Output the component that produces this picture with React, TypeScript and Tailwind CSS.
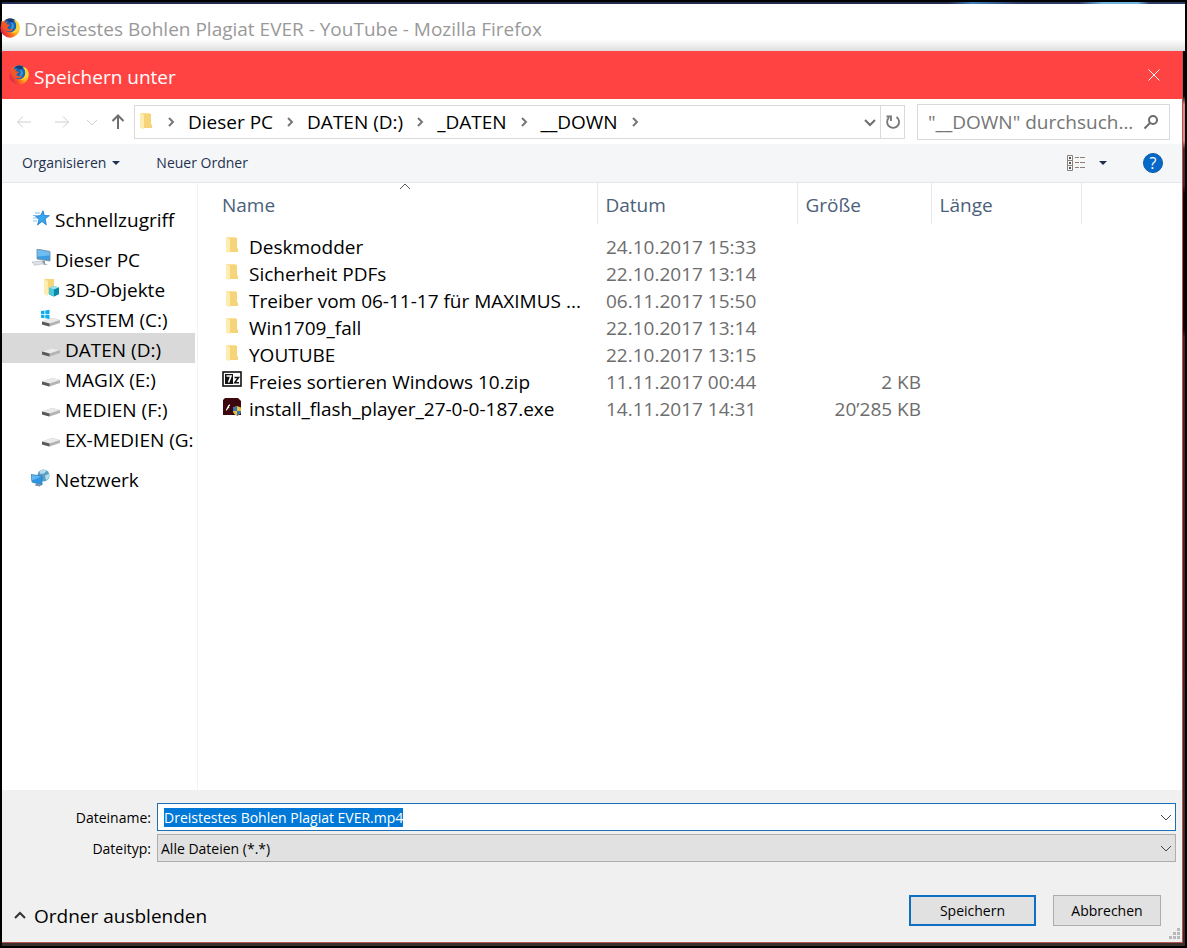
import { useEffect, useRef, type ReactNode } from 'react';

interface FileEntry {
  name: string;
  date: string;
  size?: string;
  kind: 'folder' | 'zip' | 'flash';
}

interface Place {
  label: string;
  icon: ReactNode;
  selected?: boolean;
}

interface PlaceGroup {
  root: Place;
  children: Place[];
}

const FirefoxIcon = () => (
  <svg viewBox="0 0 20 20" className="size-5 shrink-0" aria-hidden="true">
    <defs>
      <linearGradient id="fox" x1="1" y1="0.2" x2="0" y2="0.8">
        <stop offset="0" stopColor="#ffe53a" />
        <stop offset="0.4" stopColor="#ffae1c" />
        <stop offset="0.7" stopColor="#f9502a" />
        <stop offset="1" stopColor="#d2185a" />
      </linearGradient>
    </defs>
    <circle cx="10" cy="10" r="9.700" fill="url(#fox)" />
    <path d="M5 2.500C8-.3 13-.2 15.500 2.500c1.500 3 1.700 7-.5 9.500-2.500 3-7.500 3-9.500 0C4 9 3.500 5.500 5 2.500z" fill="#1a64b8" />
    <path d="M6 1.800C8.500-.2 12.500 0 14.800 1.900L12 4.500 8.500 3.500z" fill="#163a7c" />
    <path d="M11 4.500c2.500.5 3.500 3 2.500 5.500l-3 1.500 1.500-4z" fill="#38a0dc" />
    <path
      d="M1.500 2.800c1 1.200 2 1.700 3.500 1.700.9-.5 2-.8 3-.7-1 .8-1.400 1.600-1.300 2.400l3 .6c.2 1-.6 1.500-2 2-.5 1 .2 2 1.400 2.400 1.600.500 2.700-.7 3.800 0-.7 1.500-2 2-3.400 2-3.500.2-6-2-7-5C1.500 6.500 1 4.500 1.500 2.800z"
      fill="#f0582a"
    />
    <path d="M13.500 2c2.500 2 3.300 5 2.500 8-.6 2.500-2.500 4.200-5 4.700 4 .8 8-2 8.600-6C19.800 5.500 17 2.500 13.500 2z" fill="#ffd334" />
  </svg>
);

const FolderIcon = () => (
  <svg viewBox="0 0 14 18" className="h-[18px] w-[14px] shrink-0" aria-hidden="true">
    <path d="M1 1h10v15H1z" fill="#fbe29a" />
    <path d="M4 2h8v10l1 1v3H4z" fill="#f6d47a" />
    <path d="M1 1l4 2v14l-4-1z" fill="#ffecb0" />
  </svg>
);

const ZipIcon = () => (
  <svg viewBox="0 0 20 16" className="h-4 w-5 shrink-0" aria-hidden="true">
    <rect x="1" y="1" width="18" height="14" fill="#fff" stroke="#111" strokeWidth="1.600" />
    <rect x="3" y="3" width="8" height="10" fill="#111" />
    <path d="M4.500 5h4.500L6.500 11.500" stroke="#fff" strokeWidth="1.600" fill="none" />
    <path d="M12.500 6.500h4L12.800 11.800h4.200" stroke="#111" strokeWidth="1.600" fill="none" />
  </svg>
);

const FlashIcon = () => (
  <svg viewBox="0 0 20 18" className="h-[18px] w-5 shrink-0" aria-hidden="true">
    <path d="M3 0h13l3 3v14H1V2z" fill="#3c080d" />
    <path d="M4 12c1.500 0 2-5 4-5M5.500 9.700h1.700" stroke="#fff" strokeWidth="1.300" fill="none" />
    <path d="M11 9.500l4-1.500 4 1.500v3.500c0 2.500-2.300 4-4 5-1.700-1-4-2.500-4-5z" fill="#e9c23d" />
    <path d="M11 9.500l4-1.500v5h-4zM15 13h4c0 2.500-2.300 4-4 5z" fill="#3276b8" />
  </svg>
);

const StarIcon = () => (
  <svg viewBox="0 0 18 16" className="h-4 w-[18px] shrink-0" aria-hidden="true">
    <path
      d="M11 .8l1.300 4.700 5 .2-4.200 3.100 1.200 6-4.300-3.300L5.500 15l1.600-5.500-3.600-3.300 5-.7z"
      fill="#39a5ee"
      stroke="#1976c8"
      strokeWidth="0.800"
    />
    <path d="M3 3h5M1 5.500h4M1 8h4M1 11h4" stroke="#6bb9ee" strokeWidth="0.900" />
  </svg>
);

const ComputerIcon = () => (
  <svg viewBox="0 0 20 18" className="h-[18px] w-5 shrink-0" aria-hidden="true">
    <path d="M6 0l13 2.500v9.500L6 10z" fill="#3c9de2" stroke="#78899a" strokeWidth="0.800" />
    <path d="M6.500.6l12 2.400v3.500l-12 1z" fill="#6fbdf0" />
    <path d="M11 11.500l3 .5v2.500l3 1.500-5-.5z" fill="#8b98a3" />
    <path d="M1 13l9-1 3 2.600-9.500 1.700z" fill="#dce2e6" stroke="#aeb7bd" strokeWidth="0.600" />
  </svg>
);

const ObjectsIcon = () => (
  <svg viewBox="0 0 20 20" className="size-5 shrink-0" aria-hidden="true">
    <path d="M3 1h10v15H3z" fill="#f6d47a" />
    <path d="M3 1l4 2v15l-4-2z" fill="#ffecb0" />
    <path d="M8 10l5-2 5 1.500v6.500l-5 2.500-5-2z" fill="#1ba6c4" />
    <path d="M8 10l5-2 5 1.500-5 2z" fill="#9ae5f1" />
    <path d="M13 11.500l5-2v6.500l-5 2.500z" fill="#0b87a8" />
    <path d="M8 10l5 1.500v7l-5-2z" fill="#45c8dd" />
  </svg>
);

const DriveIcon = ({ system = false }: { system?: boolean }) => (
  <svg viewBox="0 0 20 20" className="size-5 shrink-0" aria-hidden="true">
    <path d="M1 13.500L11 10l8 2v3L8.500 18.500 1 16.500z" fill="#b4b4b4" />
    <path d="M1 13.500L11 10l8 2-10.500 3.500z" fill="#eaeaea" />
    <path d="M1 13.500l7.500 2v3L1 16.500z" fill="#5a5a5a" />
    {system && (
      <path d="M0 3l3.500-.5V6H0zM4.300 2.400L8.500 1.800V6H4.300zM0 6.800h3.500v3.400L0 9.800zM4.300 6.800h4.200V11l-4.200-.7z" fill="#10aee8" />
    )}
  </svg>
);

const NetworkIcon = () => (
  <svg viewBox="0 0 20 18" className="h-[18px] w-5 shrink-0" aria-hidden="true">
    <circle cx="12.500" cy="6.500" r="6" fill="#5b9fc4" />
    <path d="M8.500 2.500c2-2 5-2.500 7-.6L13 4.500 9.500 5zM14 6.500l4-1.500c.5 3-.6 5-3 6.500z" fill="#b7dceb" />
    <path d="M0 5.500l11 1.500v9L1 13z" fill="#2c94e0" stroke="#2878b4" strokeWidth="0.700" />
    <path d="M.5 6l10 1.500-9.500 4z" fill="#63b7f0" />
    <path d="M5 14.500l5 1.500-1 1.500-5-1z" fill="#7790a0" />
  </svg>
);

type Direction = 'up' | 'down' | 'right';

const chevronPaths: Record<Direction, string> = {
  up: 'M1 8l5-5 5 5',
  down: 'M1 4l5 5 5-5',
  right: 'M4 2l4 4-4 4',
};

const Chevron = ({ direction, className }: { direction: Direction; className: string }) => (
  <svg viewBox="0 0 12 12" className={`size-3 shrink-0 ${className}`} fill="none" stroke="currentColor" aria-hidden="true">
    <path d={chevronPaths[direction]} />
  </svg>
);

const Arrow = ({ className }: { className: string }) => (
  <svg viewBox="0 0 16 16" className={`size-4 shrink-0 ${className}`} fill="none" stroke="currentColor" aria-hidden="true">
    <path d="M15 8H1.500M7 2.500L1.500 8 7 13.500" />
  </svg>
);

const Triangle = () => (
  <svg viewBox="0 0 8 4" className="h-1 w-2 shrink-0" aria-hidden="true">
    <path d="M0 0h8L4 4z" fill="#1e3250" />
  </svg>
);

const fileIcons: Record<FileEntry['kind'], ReactNode> = {
  folder: <FolderIcon />,
  zip: <ZipIcon />,
  flash: <FlashIcon />,
};

const crumbs = ['Dieser PC', 'DATEN (D:)', '_DATEN', '__DOWN'];

const placeGroups: PlaceGroup[] = [
  { root: { label: 'Schnellzugriff', icon: <StarIcon /> }, children: [] },
  {
    root: { label: 'Dieser PC', icon: <ComputerIcon /> },
    children: [
      { label: '3D-Objekte', icon: <ObjectsIcon /> },
      { label: 'SYSTEM (C:)', icon: <DriveIcon system /> },
      { label: 'DATEN (D:)', icon: <DriveIcon />, selected: true },
      { label: 'MAGIX (E:)', icon: <DriveIcon /> },
      { label: 'MEDIEN (F:)', icon: <DriveIcon /> },
      { label: 'EX-MEDIEN (G:', icon: <DriveIcon /> },
    ],
  },
  { root: { label: 'Netzwerk', icon: <NetworkIcon /> }, children: [] },
];

const files: FileEntry[] = [
  { name: 'Deskmodder', date: '24.10.2017 15:33', kind: 'folder' },
  { name: 'Sicherheit PDFs', date: '22.10.2017 13:14', kind: 'folder' },
  { name: 'Treiber vom 06-11-17 für MAXIMUS ...', date: '06.11.2017 15:50', kind: 'folder' },
  { name: 'Win1709_fall', date: '22.10.2017 13:14', kind: 'folder' },
  { name: 'YOUTUBE', date: '22.10.2017 13:15', kind: 'folder' },
  { name: 'Freies sortieren Windows 10.zip', date: '11.11.2017 00:44', size: '2 KB', kind: 'zip' },
  { name: 'install_flash_player_27-0-0-187.exe', date: '14.11.2017 14:31', size: '20’285 KB', kind: 'flash' },
];

const NavigationBar = () => (
  <nav className="flex h-[45px] items-center pr-3">
    <div className="flex w-[132px] shrink-0 items-center">
      <button type="button" aria-label="Zurück" className="ml-3.5">
        <Arrow className="text-[#cfcfcf]" />
      </button>
      <button type="button" aria-label="Vorwärts" className="ml-[22px]">
        <Arrow className="rotate-180 text-[#cfcfcf]" />
      </button>
      <button type="button" aria-label="Zuletzt besucht" className="ml-4">
        <Chevron direction="down" className="text-[#cfcfcf]" />
      </button>
      <button type="button" aria-label="Nach oben" className="ml-3">
        <Arrow className="rotate-90 stroke-2 text-[#6e6e6e]" />
      </button>
    </div>
    <div className="flex h-[34px] flex-1 items-center border border-[#d9d9d9]">
      <span className="ml-1 pb-0.5">
        <FolderIcon />
      </span>
      <Chevron direction="right" className="mr-[11px] ml-3 stroke-2 text-[#777]" />
      {crumbs.map((crumb) => (
        <div key={crumb} className="flex items-center">
          <button type="button" className="whitespace-nowrap pt-0.5">
            {crumb}
          </button>
          <Chevron direction="right" className="mx-[11px] stroke-2 text-[#777]" />
        </div>
      ))}
      <button type="button" aria-label="Vorherige Orte" className="mr-1 ml-auto">
        <Chevron direction="down" className="stroke-2 text-[#6e6e6e]" />
      </button>
      <button
        type="button"
        aria-label="Aktualisieren"
        className="flex h-full w-6 items-center justify-center border-l border-[#d9d9d9]"
      >
        <svg viewBox="0 0 16 16" className="size-4" fill="none" stroke="#777" strokeWidth="1.800" aria-hidden="true">
          <path d="M11.500 2.900A6 6 0 1 1 4 3.500" />
          <path d="M1.500 2.500h4.500v4.500" />
        </svg>
      </button>
    </div>
    <div className="ml-3 flex h-9 w-[253px] shrink-0 items-center border border-[#d9d9d9] pr-2.5 pl-2.5">
      <input
        type="text"
        aria-label="Suchen"
        placeholder={'"__DOWN" durchsuch...'}
        className="min-w-0 flex-1 pt-0.5 outline-none placeholder:text-[#757575]"
      />
      <svg viewBox="0 0 16 16" className="size-4 shrink-0" fill="none" stroke="#6b6b6b" strokeWidth="2" aria-hidden="true">
        <circle cx="10" cy="6" r="4" />
        <path d="M7 9l-5.500 5.500" />
      </svg>
    </div>
  </nav>
);

const Toolbar = () => (
  <div className="flex h-[39px] items-center border-b border-[#e3e6ea] bg-[#f5f6f8] pr-[19px] pl-5 text-sm text-[#1e3250]">
    <button type="button" className="flex items-center gap-1.5">
      Organisieren
      <Triangle />
    </button>
    <button type="button" className="ml-9">
      Neuer Ordner
    </button>
    <button type="button" aria-label="Ansicht ändern" className="ml-auto flex items-center gap-3.5">
      <svg viewBox="0 0 18 16" className="h-4 w-[18px]" fill="none" stroke="#8c8078" aria-hidden="true">
        <path d="M.5.5h5v15h-5zM.5 5.500h5M.5 10.500h5M8 2.500h4M13 2.500h5M8 7.500h4M13 7.500h5M8 12.500h4M13 12.500h5" />
        <path d="M2 3h2M2 8h2M2 13h2" stroke="#555" strokeWidth="2" />
      </svg>
      <Triangle />
    </button>
    <button
      type="button"
      aria-label="Hilfe"
      className="ml-9 flex size-5 items-center justify-center rounded-full border border-[#0a5aa8] bg-[#0669c8] text-base text-white"
    >
      ?
    </button>
  </div>
);

const PlaceItem = ({ place, nested = false }: { place: Place; nested?: boolean }) => (
  <li>
    <button
      type="button"
      className={`flex h-[30px] w-full items-center gap-1 whitespace-nowrap ${nested ? 'pl-[39px]' : 'pl-[29px]'} ${
        place.selected ? 'bg-[#d9d9d9]' : ''
      }`}
    >
      <span className="flex w-5 shrink-0 justify-center">{place.icon}</span>
      <span className="pt-1">{place.label}</span>
    </button>
  </li>
);

const Sidebar = () => (
  <aside className="w-[196px] shrink-0 border-r border-[#f3f3f3] pt-5 pr-0.5">
    <ul className="flex flex-col gap-2.5">
      {placeGroups.map((group) => (
        <li key={group.root.label}>
          <ul>
            <PlaceItem place={group.root} />
            {group.children.map((child) => (
              <PlaceItem key={child.label} place={child} nested />
            ))}
          </ul>
        </li>
      ))}
    </ul>
  </aside>
);

const FileTable = () => (
  <table className="w-full table-fixed self-start border-collapse text-left">
    <colgroup>
      <col className="w-[399px]" />
      <col className="w-[200px]" />
      <col className="w-[134px]" />
      <col className="w-[150px]" />
      <col />
    </colgroup>
    <thead>
      <tr className="h-[41px] text-[#4c607a]">
        <th className="relative border-r border-[#e3e6ea] pt-1 pl-6 font-normal">
          Name
          <Chevron direction="up" className="absolute -top-0.5 left-[201px] text-[#555]" />
        </th>
        <th className="border-r border-[#e3e6ea] pt-1 pl-2 font-normal">Datum</th>
        <th className="border-r border-[#e3e6ea] pt-1 pl-2 font-normal">Größe</th>
        <th className="border-r border-[#e3e6ea] pt-1 pl-2 font-normal">Länge</th>
        <td />
      </tr>
    </thead>
    <tbody className="before:block before:h-2.5">
      {files.map((file) => (
        <tr key={file.name} className="h-[27px] whitespace-nowrap text-[#6d6d6d]">
          <td className="py-0 pl-6">
            <span className="flex h-[27px] items-center gap-[7px] text-black">
              <span className="flex h-6 w-5 shrink-0 items-start justify-center">{fileIcons[file.kind]}</span>
              {file.name}
            </span>
          </td>
          <td className="py-0 pl-[9px]">{file.date}</td>
          <td className="py-0 pr-2.5 text-right">{file.size}</td>
          <td />
          <td />
        </tr>
      ))}
    </tbody>
  </table>
);

const SaveForm = () => {
  const nameRef = useRef<HTMLInputElement>(null);

  useEffect(() => {
    nameRef.current?.focus();
    nameRef.current?.select();
  }, []);

  return (
    <form
      className="bg-[#f0f0f0] pt-[13px] text-sm text-black"
      onSubmit={(event) => event.preventDefault()}
    >
      <div className="grid grid-cols-[149px_1fr] items-center gap-x-1.5 gap-y-[3px] pr-1.5">
        <label htmlFor="filename" className="pt-0.5 text-right">
          Dateiname:
        </label>
        <div className="relative">
          <input
            id="filename"
            ref={nameRef}
            type="text"
            defaultValue="Dreistestes Bohlen Plagiat EVER.mp4"
            className="block h-7 w-full border border-[#1c6fb5] bg-white pr-8 pl-1.5 leading-5 outline-none selection:bg-[#0078d7] selection:text-white"
          />
          <Chevron direction="down" className="pointer-events-none absolute top-2 right-1 text-[#444]" />
        </div>
        <label htmlFor="filetype" className="pt-0.5 text-right">
          Dateityp:
        </label>
        <div className="relative">
          <select
            id="filetype"
            className="block h-7 w-full appearance-none border border-[#adadad] bg-[#e1e1e1] pt-0.5 pr-8 pl-[3px] leading-5 outline-none"
          >
            <option>Alle Dateien (*.*)</option>
          </select>
          <Chevron direction="down" className="pointer-events-none absolute top-2 right-1 text-[#444]" />
        </div>
      </div>
      <div className="mt-[33px] flex items-center pr-[21px] pb-4 pl-3">
        <button type="button" className="flex items-center gap-2 pt-2.5 text-[19px] leading-5">
          <Chevron direction="up" className="stroke-2 text-[#333]" />
          Ordner ausblenden
        </button>
        <button type="submit" className="ml-auto h-[31px] w-[127px] border-2 border-[#0f6fc5] bg-[#e1e1e1]">
          Speichern
        </button>
        <button type="button" className="ml-[17px] h-[31px] w-[108px] border border-[#adadad] bg-[#e1e1e1]">
          Abbrechen
        </button>
      </div>
    </form>
  );
};

const App = () => {
  return (
    <div className="flex min-h-screen flex-col border-2 border-black bg-white font-['Open_Sans','Noto_Sans',sans-serif] text-[19px] leading-[27px] text-black">
      <div className="h-0.5 bg-[linear-gradient(90deg,#242b4d_0%,#242b4d_80%,#3f7fb8_82%,#2c3a66_86%,#2c3a66_91%,#6cb2dc_93%,#6cb2dc_96%,#2c3a66_97%)]" />
      <header className="flex h-[47px] items-center gap-1 bg-[linear-gradient(#fff_75%,#dedede)] text-[#999]">
        <span className="-ml-0.5">
          <FirefoxIcon />
        </span>
        <h1 className="pt-1">Dreistestes Bohlen Plagiat EVER - YouTube - Mozilla Firefox</h1>
      </header>
      <div className="flex flex-1 bg-[linear-gradient(#0a0406_0%,#0a0406_5%,#d98a8e_6%,#d98a8e_10%,#4a2529_11%,#4a2529_15%,#0a0406_16%,#0a0406_31%,#4d1f26_32%,#4d1f26_69%,#3a2f2d_72%,#3a2f2d_100%)] pr-0.5 pb-[3px]">
        <main className="relative flex min-w-0 flex-1 flex-col border-r border-b border-[#b9524f] bg-white">
          <div className="flex h-12 items-center gap-[5px] bg-[#ff4343] pr-[22px] pl-[7px] text-white">
            <FirefoxIcon />
            <h2 className="pt-1">Speichern unter</h2>
            <button type="button" aria-label="Schließen" className="ml-auto">
              <svg viewBox="0 0 12 12" className="size-3" fill="none" stroke="#fff" aria-hidden="true">
                <path d="M.5.5l11 11M11.500.5l-11 11" />
              </svg>
            </button>
          </div>
          <NavigationBar />
          <Toolbar />
          <div className="flex flex-1">
            <Sidebar />
            <FileTable />
          </div>
          <SaveForm />
          <svg viewBox="0 0 12 12" className="absolute right-0.5 bottom-0.5 size-3" fill="#b8b8b8" aria-hidden="true">
            <path d="M9 0h3v3H9zM5 4h3v3H5zM9 4h3v3H9zM1 8h3v3H1zM5 8h3v3H5zM9 8h3v3H9z" />
          </svg>
        </main>
      </div>
    </div>
  );
};

export default App;
